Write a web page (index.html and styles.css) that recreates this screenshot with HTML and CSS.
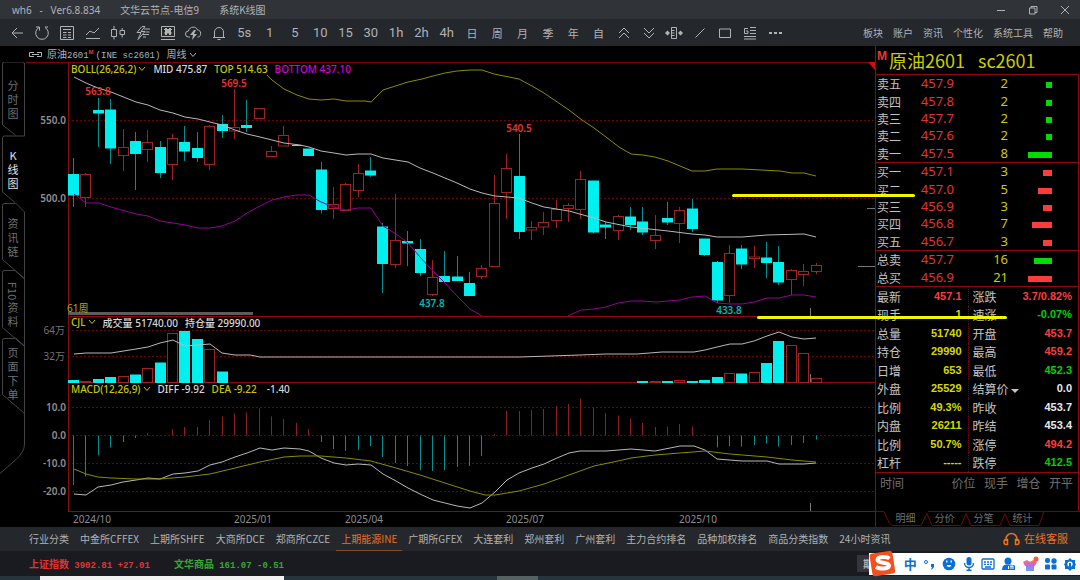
FILE: index.html
```
<!DOCTYPE html>
<html lang="zh-CN">
<head>
<meta charset="utf-8">
<meta name="viewport" content="width=device-width, initial-scale=1">
<title>wh6 - 系统K线图</title>
<link rel="stylesheet" href="styles.css">
</head>
<body>

<header class="titlebar">
    <span class="app">wh6&nbsp;&nbsp; -&nbsp;&nbsp; Ver6.8.834</span>
    <span class="node">文华云节点-电信9</span>
    <span>系统K线图</span>
    <div class="window-buttons">
        <button aria-label="最小化"><svg width="10" height="10"><path d="M1 5.500h8"/></svg></button>
        <button aria-label="还原"><svg width="10" height="10"><path d="M1.500 3h5.500v6h-5.500zM3 3v-1.500h6v6h-2"/></svg></button>
        <button aria-label="关闭"><svg width="10" height="10"><path d="M1 1l8 8M9 1l-8 8"/></svg></button>
    </div>
</header>

<div class="toolbar">
    <nav class="tools">
        <button aria-label="返回"><svg width="16" height="16"><path d="M14 8h-11M8 3l-5 5 5 5"/></svg></button>
        <button aria-label="刷新"><svg width="16" height="16"><path d="M5 2.500a6.300 6.300 0 1 0 6 0M2 2h3.500v3.500M14 2h-3"/></svg></button>
        <button aria-label="报价"><svg width="16" height="16"><path d="M1.500 1.500h13v13h-13zM4 4.500h8M4 7.500h3.500M9 7.500h3M4 10h3.500M9 10h3M4 12.500h3.500M9 12.500h3"/></svg></button>
        <button aria-label="分时"><svg width="16" height="16"><path d="M1 10l4-4 4 2 5-5M1 13.500h14"/></svg></button>
        <button aria-label="K线"><svg width="16" height="16"><path d="M1.500 4.500h5v7h-5zM4 1v3.500M4 11.500v3M10 5.500h4.500v4h-4.500zM12.200 3v2.500M12.200 9.500v3"/></svg></button>
        <button aria-label="闪电下单"><svg width="16" height="16"><path d="M7 1.500l-5 6h4l-3 7 7-8h-4l4-5zM9 4h6M10.500 7h4M8 9.500h6M11 12h-3"/></svg></button>
        <button aria-label="画线下单"><svg width="16" height="16"><path d="M1.500 1.500h13v10h-13zM1 14.500h14M4 4.500h8M4 8h8"/><path class="solid" d="M5 3h2v7h-2zM9 3h2v7h-2zM7 5h2v3h-2z"/></svg></button>
        <button aria-label="云交易"><svg width="17" height="16"><path d="M5 12h-1.500a3 3 0 0 1 0-6c1-5 8-5 9-1 4 0 4 6 1 7h-1"/><path class="solid" d="M9 5l-4 5h3l-1 5 5-6h-3l2-4z"/></svg></button>
        <button aria-label="预警"><svg width="16" height="16"><path d="M2 12.500h12M3.500 12.500v-5.500a4.500 4.500 0 0 1 9 0v5.500M6.500 14.500h3"/></svg></button>
        <button>5s</button>
        <button>1</button>
        <button>5</button>
        <button>10</button>
        <button>15</button>
        <button>30</button>
        <button>1h</button>
        <button>2h</button>
        <button>4h</button>
        <button class="cn">日</button>
        <button class="cn">周</button>
        <button class="cn">月</button>
        <button class="cn">季</button>
        <button class="cn">年</button>
        <button class="cn">自</button>
        <button aria-label="放大"><svg width="14" height="14"><path d="M2 7l5-5 5 5M2 12l5-5 5 5"/></svg></button>
        <button aria-label="缩小"><svg width="14" height="14"><path d="M2 2l5 5 5-5M2 7l5 5 5-5"/></svg></button>
        <button aria-label="区间"><svg width="18" height="14"><path d="M6.500 1.500h5v11h-5zM6.500 4.500h3M6.500 7h3M6.500 9.500h3"/><path class="solid" d="M0 7l2.500-2.500 2.500 2.500-2.500 2.500zM18 7l-2.500-2.500-2.500 2.500 2.500 2.500z"/></svg></button>
        <button aria-label="画线"><svg width="12" height="12"><path d="M1.500 10.500l9-9"/></svg></button>
        <button aria-label="矩形"><svg width="14" height="12"><path d="M1.500 2h11v8.500h-11z"/></svg></button>
        <button aria-label="列表"><svg width="14" height="14"><path d="M7 1.500h6M7 4.500h6M7 7.500h6M1 10.500h12M1 13h12M5 2.500h-3.500v5h3.500v-2.500h-2"/></svg></button>
        <button aria-label="更多"><svg width="14" height="4"><path class="solid" d="M0 1h3v2h-3zM5 1h3v2h-3zM10 1h3v2h-3z"/></svg></button>
    </nav>
    <nav class="menu">
        <button>板块</button>
        <button>账户</button>
        <button>资讯</button>
        <button>个性化</button>
        <button>系统工具</button>
        <button>帮助</button>
    </nav>
</div>

<main class="workspace">
    <section class="left">
        <div class="contract">
            <svg width="15" height="7" aria-hidden="true"><path d="M6 1.500h-4.500v4h4.500M9 1.500h4.500v4h-4.500M4 3.500h7"/></svg>
            <span class="contract-name">原油<span class="mono">2601</span></span>
            <sup>M</sup>
            <span class="mono">(INE sc2601)</span>
            <button class="period">周线 <svg width="8" height="6"><path d="M1 1l3 3.500 3-3.500"/></svg></button>
        </div>

        <div class="stage">
            <nav class="side-tabs">
                <svg class="side-lines" width="26" height="420" aria-hidden="true">
                    <path d="M24.500 74v-10q0-2-2-2h-18q-2 0-2 2v61l13 10M24.500 136h-20q-2 0-2 2v54l13 11M15 203.500h-11q-1.500 0-1.500 2v54l22 19M24.500 212l-9-9M15 270.500h-11q-1.500 0-1.500 2v55l22 19M24.500 279l-9-8M15 338.500h-11q-1.500 0-1.500 2v54l22 19M24.500 346l-9-8M24.500 63v73M24.500 212v232q0 8-9 16l-16 14" transform="translate(0 -62)"/>
                </svg>
                <button>分时图</button>
                <button class="active">K线图</button>
                <button>资讯链</button>
                <button><span class="turned">F10</span>资料</button>
                <button>页面下单</button>
            </nav>

            <div class="chart">
                <svg id="chart" viewBox="26 62 849 465" role="img" aria-label="原油2601 周K线"></svg>

                <div class="legend legend-boll">
                    <button>BOLL(26,26,2)<svg width="8" height="6"><path d="M1 1l3 3.500 3-3.500"/></svg></button>
                    <span class="white">MID 475.87</span>
                    <span>TOP 514.63</span>
                    <span class="magenta">BOTTOM 437.10</span>
                </div>
                <div class="legend legend-vol">
                    <button>CJL<svg width="8" height="6"><path d="M1 1l3 3.500 3-3.500"/></svg></button>
                    <span class="white">成交量 51740.00</span>
                    <span class="white">持仓量 29990.00</span>
                </div>
                <div class="legend legend-macd">
                    <button>MACD(12,26,9)<svg width="8" height="6"><path d="M1 1l3 3.500 3-3.500"/></svg></button>
                    <span class="white">DIFF -9.92</span>
                    <span>DEA -9.22</span>
                    <span class="white hist">-1.40</span>
                </div>
            </div>
        </div>
    </section>

    <aside class="quote">
        <h1><sup>M</sup><span>原油2601</span><span class="code">sc2601</span></h1>

        <table class="book">
            <tbody class="sell">
                <tr><th>卖五</th><td>457.9</td><td>2</td><td><i style="width:6px"></i></td></tr>
                <tr><th>卖四</th><td>457.8</td><td>2</td><td><i style="width:6px"></i></td></tr>
                <tr><th>卖三</th><td>457.7</td><td>2</td><td><i style="width:6px"></i></td></tr>
                <tr><th>卖二</th><td>457.6</td><td>2</td><td><i style="width:6px"></i></td></tr>
                <tr><th>卖一</th><td>457.5</td><td>8</td><td><i style="width:24px"></i></td></tr>
            </tbody>
        </table>
        <table class="book">
            <tbody class="buy">
                <tr><th>买一</th><td>457.1</td><td>3</td><td><i style="width:9px"></i></td></tr>
                <tr><th>买二</th><td>457.0</td><td>5</td><td><i style="width:14px"></i></td></tr>
                <tr><th>买三</th><td>456.9</td><td>3</td><td><i style="width:9px"></i></td></tr>
                <tr><th>买四</th><td>456.8</td><td>7</td><td><i style="width:20px"></i></td></tr>
                <tr><th>买五</th><td>456.7</td><td>3</td><td><i style="width:9px"></i></td></tr>
            </tbody>
        </table>
        <table class="book total">
            <tbody>
                <tr class="sell"><th>总卖</th><td>457.7</td><td>16</td><td><i style="width:18px"></i></td></tr>
                <tr class="buy"><th>总买</th><td>456.9</td><td>21</td><td><i style="width:24px"></i></td></tr>
            </tbody>
        </table>

        <table class="details">
            <tr><th>最新</th><td class="up">457.1</td><th>涨跌</th><td class="up">3.7/0.82%</td></tr>
            <tr><th>现手</th><td>1</td><th>速涨</th><td class="down">-0.07%</td></tr>
            <tr><th>总量</th><td>51740</td><th>开盘</th><td class="up">453.7</td></tr>
            <tr><th>持仓</th><td>29990</td><th>最高</th><td class="up">459.2</td></tr>
            <tr><th>日增</th><td>653</td><th>最低</th><td class="down">452.3</td></tr>
            <tr><th>外盘</th><td>25529</td><th>结算价<svg width="8" height="5"><path class="solid" d="M0 0h8l-4 4z"/></svg></th><td class="flat">0.0</td></tr>
            <tr><th>比例</th><td>49.3%</td><th>昨收</th><td class="flat">453.7</td></tr>
            <tr><th>内盘</th><td>26211</td><th>昨结</th><td class="flat">453.4</td></tr>
            <tr><th>比例</th><td>50.7%</td><th>涨停</th><td class="up">494.2</td></tr>
            <tr><th>杠杆</th><td>-----</td><th>跌停</th><td class="down">412.5</td></tr>
        </table>

        <div class="trades">
            <table>
                <tr><th>时间</th><th>价位</th><th>现手</th><th>增仓</th><th>开平</th></tr>
            </table>
        </div>

        <nav class="quote-tabs">
            <svg width="205" height="16" aria-hidden="true"><path d="M0 .500h8l5 11 3 3h29l6-12M51 2.500l5 12h29l5-12M90 2.500l5 12h29l5-12M129 2.500l5 12h29l5-14M52 .500h152"/></svg>
            <button>明细</button>
            <button>分价</button>
            <button>分笔</button>
            <button>统计</button>
        </nav>
    </aside>

    <div class="level level-top"></div>
    <div class="level level-bottom"></div>
</main>

<nav class="markets">
    <a href="#">行业分类</a>
    <a href="#">中金所CFFEX</a>
    <a href="#">上期所SHFE</a>
    <a href="#">大商所DCE</a>
    <a href="#">郑商所CZCE</a>
    <a href="#" class="active">上期能源INE</a>
    <a href="#">广期所GFEX</a>
    <a href="#">大连套利</a>
    <a href="#">郑州套利</a>
    <a href="#">广州套利</a>
    <a href="#">主力合约排名</a>
    <a href="#">品种加权排名</a>
    <a href="#">商品分类指数</a>
    <a href="#">24小时资讯</a>
    <a href="#" class="service"><svg width="17" height="14"><path d="M3 9v-2a5.500 5.500 0 0 1 11 0v2M3 7.500q-2 0-2 2.500t2 2.500h1.500v-5zM14 7.500q2 0 2 2.500t-2 2.500h-1.500v-5z"/></svg>在线客服</a>
</nav>

<footer class="status">
    <span class="index up">上证指数 <span class="mono">3902.81 +27.01</span></span>
    <span class="index green">文华商品 <span class="mono">161.07 -0.51</span></span>
    <button class="futures">期货</button>
</footer>

<div class="desktop">
    <div class="search"></div>
    <div class="task"></div>
</div>

<div class="ime">
    <svg class="ime-logo" width="28" height="28" viewBox="0 0 28 28" aria-hidden="true">
        <rect x="2" y="2" width="23" height="23" rx="3" fill="#f4501e" transform="rotate(-9 14 14)"/>
        <path d="M20.500 8.500c-3-2.500-12-2-12 1.500s11.500 2 11.500 5.500-9 4-13 1.500" fill="none" stroke="#fff" stroke-width="4"/>
    </svg>
    <button class="zh">中</button>
    <button aria-label="标点"><svg width="12" height="12"><circle cx="3" cy="4" r="1.500" fill="none" stroke="#0a6fd8"/><path class="solid" d="M8 6h3v3l-2 2.500h-1l1-2.500h-1z"/></svg></button>
    <button aria-label="表情"><svg width="14" height="14"><circle class="solid" cx="7" cy="7" r="6.300"/><path d="M4 7.500h6a3 3 0 0 1-6 0z" fill="#fff"/><path d="M4.800 3.500v2M9.200 3.500v2" stroke="#fff" stroke-width="1.400"/></svg></button>
    <button aria-label="语音"><svg width="12" height="14"><rect class="solid" x="3.500" y="0" width="5" height="8.500" rx="2.500"/><path d="M1.500 6a4.500 4.500 0 0 0 9 0M6 10.500v3M3.500 13.300h5" fill="none" stroke="#0a6fd8" stroke-width="1.400"/></svg></button>
    <button aria-label="键盘"><svg width="14" height="12"><rect x="1" y="1" width="12" height="10" rx="1" fill="none" stroke="#0a6fd8" stroke-width="1.300"/><path d="M3 4h2M6 4h2M9 4h2M3 6.300h2M6 6.300h2M9 6.300h2M4 9h6" stroke="#0a6fd8" stroke-width="1.300"/></svg></button>
    <button aria-label="用户"><svg width="14" height="14"><circle class="solid" cx="6" cy="4" r="3.500"/><path class="solid" d="M0 13q0-5 4-5.500h4l5 1v4.500z"/><path d="M6.500 9v3M9 9v3M8 9h3v3" fill="none" stroke="#fff"/></svg></button>
    <button aria-label="皮肤"><svg width="16" height="16"><defs><linearGradient id="shirt" x2="0" y2="1"><stop offset="0" stop-color="#ff6a5a"/><stop offset=".5" stop-color="#b66cf0"/><stop offset="1" stop-color="#5aa8ff"/></linearGradient></defs><path d="M4 4q3 3 6 0l4 2-2 4h-1v5h-8v-5h-1l-2-4z" fill="url(#shirt)" stroke="none"/><circle cx="13" cy="3" r="2.500" fill="#ff5a36" stroke="none"/></svg></button>
    <button aria-label="工具箱"><svg width="12" height="12"><rect class="solid" x="0" y="0" width="5" height="5" rx="2"/><circle class="solid" cx="9" cy="3" r="2.700"/><rect class="solid" x="0" y="6.500" width="5" height="5" rx="1"/><rect class="solid" x="6.500" y="6.500" width="5" height="5" rx="1"/></svg></button>
    <button aria-label="设置"><svg width="12" height="13"><path class="solid" d="M6 0l2 2 3 0 0 3 1 1.500-1 1.500v3h-3l-2 2-2-2h-3v-3l-1-1.500 1-1.500v-3h3z"/><circle cx="6" cy="6" r="2.600" fill="#fff" stroke="none"/><path d="M6 5v6" stroke-width="2"/></svg></button>
</div>

<script src="chart.js"></script>
</body>
</html>
```
FILE: styles.css
```
* {
    box-sizing: border-box;
}

body {
    display: flex;
    flex-direction: column;
    height: 100vh;
    margin: 0;
    overflow: hidden;
    position: relative;
    background: #000;
    color: #b0b2b4;
    font-family: "Noto Sans CJK SC", "Noto Sans", sans-serif;
    font-size: 10px;
}

button {
    margin: 0;
    padding: 0;
    border: none;
    background: none;
    color: inherit;
    font: inherit;
    cursor: pointer;
}

svg {
    fill: none;
    stroke: currentColor;
    flex: none;
}

.solid {
    fill: currentColor;
    stroke: none;
}

table {
    border-collapse: collapse;
}

th {
    font-weight: 400;
    text-align: left;
}

th, td {
    padding: 0;
}

.mono {
    font-family: "Liberation Mono", monospace;
    font-size: 9px;
}

/* title bar */
.titlebar {
    display: flex;
    align-items: center;
    height: 19px;
    padding-left: 12px;
    background: #303338;
    gap: 20px;
}

.app {
    font-family: "Noto Sans", sans-serif;
}

.window-buttons {
    display: flex;
    gap: 22px;
    margin-left: auto;
    padding-right: 10px;
}

.window-buttons button {
    display: flex;
}

/* toolbar */
.toolbar {
    display: flex;
    align-items: center;
    justify-content: space-between;
    height: 27px;
    background: #24272b;
}

.tools {
    display: flex;
    align-items: center;
    flex: 0 0 73%;
    padding-left: 4px;
}

.tools button {
    display: flex;
    align-items: center;
    justify-content: center;
    flex: 1;
    height: 26px;
    min-width: 0;
    font-family: Roboto, sans-serif;
    font-weight: 400;
    font-size: 13px;
}

.tools .cn {
    font-family: "Noto Sans CJK SC", sans-serif;
    font-size: 11px;
}

.menu {
    display: flex;
    gap: 10px;
    padding-right: 17px;
}

/* workspace */
.workspace {
    display: flex;
    flex: 1;
    min-height: 0;
    position: relative;
}

.left {
    display: flex;
    flex-direction: column;
    flex: 1;
    min-width: 0;
}

.contract {
    display: flex;
    align-items: baseline;
    height: 16px;
    padding-left: 28px;
    line-height: 16px;
    gap: 2px;
}

.contract > svg {
    align-self: center;
    margin-right: 2px;
}

.contract sup {
    align-self: flex-start;
    margin-left: -2px;
    color: #e33;
    font: bold 6px "Liberation Sans", sans-serif;
    line-height: 12px;
}

.period {
    margin-left: 4px;
}

.stage {
    display: flex;
    flex: 1;
    min-height: 0;
}

.side-tabs {
    display: flex;
    flex-direction: column;
    align-items: center;
    width: 26px;
    position: relative;
    color: #6e7072;
}

.side-lines {
    position: absolute;
    left: 0;
    top: 0;
    stroke: #444;
}

.side-tabs button {
    display: flex;
    flex-direction: column;
    align-items: center;
    justify-content: center;
    width: 11px;
    height: 68px;
    position: relative;
    font-size: 11px;
    line-height: 14px;
    word-break: break-all;
}

.side-tabs .active {
    color: #e4e4e4;
}

.side-tabs button:first-of-type {
    height: 73px;
    padding-top: 16px;
    justify-content: flex-start;
}

.turned {
    writing-mode: vertical-rl;
}

.chart {
    flex: 1;
    min-width: 0;
    position: relative;
    overflow: hidden;
}

#chart {
    display: block;
    width: 100%;
    height: 100%;
    font-family: "Noto Sans", "Noto Sans CJK SC", sans-serif;
    font-size: 10px;
}

#chart text {
    stroke: none;
}

.legend {
    display: flex;
    align-items: center;
    gap: 7px;
    position: absolute;
    left: 45px;
    height: 14px;
    color: #c8c800;
    font-family: "Noto Sans", "Noto Sans CJK SC", sans-serif;
    font-weight: 500;
    white-space: nowrap;
}

.legend button {
    display: flex;
    align-items: center;
    gap: 2px;
}

.legend-boll {
    top: 0;
}

.legend-vol {
    top: 253px;
}

.legend-macd {
    top: 320px;
}

.white {
    color: #d8d8d8;
}

.magenta {
    color: #d800d8;
}

.legend .hist {
    margin-left: 3px;
}

.level {
    position: absolute;
    height: 3px;
    border-radius: 2px;
    background: #f5f500;
}

.level-top {
    top: 148px;
    right: 165px;
    width: 183px;
}

.level-bottom {
    top: 270px;
    right: 73px;
    width: 250px;
}

/* quote panel */
.quote {
    display: flex;
    flex-direction: column;
    width: 205px;
    padding-right: 1px;
    border-left: 1px solid #8c0a0a;
}

.quote h1 {
    display: flex;
    align-items: center;
    height: 28px;
    margin: 0;
    padding-left: 1px;
    color: #cccc00;
    font-size: 18px;
    font-weight: 400;
    line-height: 28px;
}

.quote sup {
    align-self: flex-start;
    margin-right: 2px;
    color: #e33;
    font: bold 12px "Liberation Sans", sans-serif;
    line-height: 20px;
}

.code {
    margin-left: 13px;
}

.book, .details, .trades {
    width: 100%;
    border-top: 1px solid #8c0a0a;
    border-right: 1px solid #8c0a0a;
}

.book {
    height: 88px;
    table-layout: fixed;
    font-size: 13px;
    line-height: 17px;
}

.book th {
    width: 40px;
    padding-left: 1px;
    color: #c4c4c4;
    font-size: 12px;
}

.book td {
    width: 38px;
    color: #e03434;
    font-family: "Noto Sans", sans-serif;
    text-align: right;
}

.book td:nth-child(3) {
    width: 54px;
    color: #cccc00;
}

.book td:nth-child(4) {
    width: auto;
    padding-right: 26px;
}

.book i {
    display: block;
    height: 6px;
    margin-left: auto;
    margin-top: 3px;
}

.sell i {
    background: #00dc00;
}

.buy i {
    background: #ff3c3c;
}

.total {
    height: 36px;
}

.details {
    height: 186px;
    table-layout: fixed;
    font-size: 12px;
    line-height: 17px;
}

.details th {
    width: 32px;
    padding-left: 1px;
    color: #c4c4c4;
    white-space: nowrap;
}

.details td:nth-child(2) {
    width: 60px;
}

.details th:nth-child(3) {
    width: 48px;
    padding-left: 4px;
    border-left: 1px dotted #700808;
}

.details th svg {
    margin-left: 2px;
}

.details td {
    padding-right: 6px;
    color: #d8d800;
    font-family: "Liberation Sans", sans-serif;
    font-size: 11px;
    font-weight: 700;
    text-align: right;
}

.details td.up {
    color: #ff3c3c;
}

.details td.down {
    color: #00d000;
}

.details td.flat {
    color: #e8e8e8;
}

.trades {
    flex: 1;
    color: #707070;
    font-size: 12px;
}

.trades table {
    width: 100%;
    table-layout: fixed;
    line-height: 20px;
}

.trades th {
    padding-right: 5px;
    text-align: right;
}

.trades th:first-child {
    width: 72px;
    padding-left: 4px;
    text-align: left;
}

.quote-tabs {
    display: flex;
    height: 16px;
    padding-left: 10px;
    position: relative;
    color: #707070;
}

.quote-tabs svg {
    position: absolute;
    left: 0;
    top: 0;
    stroke: #700808;
}

.quote-tabs button {
    width: 39px;
    height: 14px;
    position: relative;
    line-height: 14px;
}

/* market tabs and status line */
.markets {
    display: flex;
    height: 24px;
    padding: 0 12px 0 24px;
    background: #24272b;
    line-height: 23px;
    gap: 1px;
}

.markets a {
    padding: 0 5px;
    border-bottom: 1px solid transparent;
    color: inherit;
    text-decoration: none;
    white-space: nowrap;
}

.markets .active {
    border-color: #8a4a20;
    color: #f07020;
}

.markets .service {
    display: flex;
    align-items: center;
    gap: 4px;
    margin-left: auto;
    padding-right: 0;
    color: #f07020;
    font-size: 11px;
}

.service svg {
    stroke-width: 1.500;
}

.status {
    display: flex;
    align-items: center;
    height: 25px;
    padding-left: 29px;
    gap: 24px;
    background: #1a1b20;
    font-weight: 700;
}

.index .mono {
    margin-left: 3px;
}

.up {
    color: #e03434;
}

.green {
    color: #35a835;
}

.futures {
    width: 40px;
    height: 17px;
    margin-left: auto;
    margin-right: 183px;
    padding-left: 6px;
    background: #34363c;
    text-align: left;
}

.desktop {
    display: flex;
    justify-content: space-between;
    height: 4px;
    padding-left: 40px;
    background: #26343b;
}

.search {
    width: 244px;
    background: #f2f2f2;
}

.task {
    width: 41px;
    margin-right: auto;
    margin-left: 213px;
    background: #566164;
}

/* input method bar floating over the window */
.ime {
    display: flex;
    align-items: center;
    justify-content: space-between;
    position: absolute;
    right: 0;
    bottom: 5px;
    width: 211px;
    height: 22px;
    padding-right: 4px;
    background: #fff;
    color: #0a6fd8;
}

.ime-logo {
    stroke: none;
}

.ime button {
    display: flex;
}

.ime .zh {
    font-size: 13px;
    font-weight: 700;
    line-height: 20px;
}
```
FILE: chart.js
```
(function() {
    "use strict";

    var chart = document.querySelector("#chart");
    var NS = "http://www.w3.org/2000/svg";
    var LEFT = 68, RIGHT = 875, FIRST = 74, STEP = 12.375;
    var CYAN = "#00f0f0", RED = "#a02222";

    // type, high, body top, body bottom, low
    var candles = [
        ["c", 158, 174.5, 195, 207], ["r", 173, 174.5, 197.5, 207], ["c", 98, 110.5, 113, 147],
        ["c", 99, 110, 148, 164], ["r", 129, 147.5, 155.5, 171], ["c", 132, 141.5, 153.5, 190],
        ["r", 130, 142.5, 149.5, 162], ["c", 141, 147.5, 172.5, 178], ["r", 134, 138.5, 164.5, 180],
        ["c", 126, 142.5, 151, 161], ["c", 132, 148.5, 157.5, 162], ["r", 125, 126.5, 164.5, 170],
        ["c", 115, 124.5, 130.5, 138], ["r", 89, 127.5, 131, 139], ["c", 100, 125.5, 127.5, 132],
        ["r", 108.5, 108.5, 118.5, 118.5], ["r", 146, 151.5, 156.5, 156.5], ["r", 126, 135.5, 146, 146],
        ["w", 145, 145, 146, 146], ["c", 149, 149, 155.5, 155.5], ["c", 162, 170, 209.5, 213.5],
        ["r", 187, 204.5, 208.5, 219], ["r", 183, 184.5, 210.5, 210.5], ["r", 164, 173.5, 190.5, 197],
        ["c", 157, 171, 175, 177], ["c", 223, 227, 263.5, 293], ["r", 194, 240.5, 264.5, 268],
        ["c", 231, 241.5, 243, 266], ["c", 239, 249.5, 272.5, 276], ["r", 260, 277.5, 294.5, 296],
        ["c", 251, 276.5, 281.5, 281.5], ["c", 256, 277, 280.5, 281], ["c", 272, 283.5, 295.5, 295.5],
        ["r", 265, 268.5, 276.5, 279], ["r", 175, 203.5, 266.5, 266.5], ["r", 154, 168.5, 192.5, 219],
        ["c", 134, 176.5, 231.5, 239], ["r", 221, 227.5, 230, 240], ["r", 212, 222.5, 227, 235],
        ["r", 200, 209.5, 220.5, 228], ["r", 203, 205.5, 208.5, 222], ["r", 171, 179.5, 209.5, 219],
        ["c", 181, 181, 232, 233.5], ["c", 222, 225, 227, 239], ["r", 215, 216.5, 230.5, 240],
        ["c", 207, 217, 224.5, 230], ["c", 207, 222, 232, 235], ["r", 215, 235.5, 240.5, 249],
        ["c", 202, 218.5, 222, 225], ["r", 207, 210.5, 223.5, 243], ["c", 199, 209, 228.5, 232],
        ["c", 239, 239, 254.5, 256], ["c", 261, 262.5, 300, 303], ["r", 245, 253.5, 295.5, 303],
        ["c", 245, 249, 264, 269], ["r", 246, 257, 258.5, 268], ["c", 242, 258, 262.5, 278],
        ["c", 246, 262.5, 282, 285], ["r", 269, 270.5, 279.5, 295], ["r", 264, 271.5, 274.5, 286],
        ["r", 263, 265.5, 271.5, 274]
    ];

    // candle index: top of the volume column
    var volume = {
        0: 380.5, 1: 381.5, 2: 379.5, 3: 377.5, 4: 376.5, 5: 375, 6: 368.5, 7: 363, 8: 333.5,
        9: 331.5, 10: 339.5, 11: 349.5, 12: 372, 46: 381.5, 47: 381.5, 48: 381.5, 49: 380.5,
        50: 381.5, 51: 380.5, 52: 377.5, 53: 373.5, 54: 374, 55: 372.5, 56: 363.5, 57: 341.5,
        58: 345.5, 59: 353.5, 60: 378.5
    };

    var macd = [
        485, 476.5, 455.5, 447.5, 442, 438, 433, 435, 429, 427, 427, 420, 416.5, 413.5, 412.5,
        408.5, 416.5, 419, 423, 429, 442, 449, 451, 450, 446, 457, 463, 466, 470, 471, 470, 467,
        466, 456, 434, 411, 411, 410, 409, 406, 404, 398.5, 407.5, 413, 415.5, 418.5, 423, 427,
        426.5, 424, 426.5, 434.5, 447.5, 446, 446.5, 445, 443.5, 446.5, 445, 443, 439.5
    ];

    var lines = [
        ["#b8b8b8", "74,77 86,83 98,88 111,92 136,102 148,105 160,110 173,113 185,117 198,119 210,122 222,125 235,130 247,134 260,137 272,140 284,143 300,145 309,147 321,151 334,153 346,155 358,154 371,154 383,158 408,162 420,168 433,173 457,183 470,189 482,193 495,196 519,198 532,203 544,207 569,211 594,218 606,222 631,227 668,231 692,234 705,235 717,237 742,237 767,235 804,234 816,237"],
        ["#8c8c00", "267,75 272,80 284,89 297,95 309,99 321,100 334,99 346,101 365,101 371,102 383,90 408,82 422,79 433,76 445,73 457,71 470,70 482,70 494,74 519,79 532,86 544,93 569,110 582,120 594,128 606,137 619,147 631,154 643,155 655,157 668,161 692,171 705,171 717,169 742,169 780,171 792,173 804,173 816,176"],
        ["#960096", "74,194 86,203 99,203 111,207 136,214 148,216 160,221 173,223 185,225 198,228 210,228 222,226 235,221 247,213 260,206 272,200 284,197 297,195 309,195 321,202 334,207 346,210 358,208 371,208 383,226 396,234 408,243 420,257 433,271 445,283 457,296 470,309 482,316"],
        ["#960096", "568,316 581,310 594,309 606,307 618,303 631,301 643,301 656,302 680,300 692,297 705,296 717,303 730,304 742,304 754,302 767,298 779,298 792,295 804,295 816,297"],
        ["#b8b8b8", "74,354 86,353 111,353 136,349 148,347 160,343 173,340 185,346 198,345 210,344 222,353 235,355 250,355 260,357 400,357 520,357 580,355 606,354 637,354 662,352 694,352 705,350 717,347 730,344 742,344 754,341 767,336 779,332 792,337 804,339 816,338"],
        ["#b8b8b8", "74,494 86,495 98,487 111,485 123,482 136,480 148,478 160,479 173,474 185,473 198,471 210,465 222,462 235,457 247,453 260,448 272,450 284,448 300,449 309,451 321,458 334,463 346,465 358,464 371,465 383,474 396,481 408,488 420,494 433,500 445,503 457,506 470,508 482,503 495,492 507,480 519,473 532,468 544,464 557,458 569,453 580,451 606,451 631,449 655,451 680,446 694,446 705,450 717,459 742,461 767,461 779,464 804,464 816,463"],
        ["#8c8c00", "74,469 86,474 98,477 111,478 136,479 160,479 185,477 210,474 235,468 260,462 284,457 300,456 321,456 346,458 371,461 396,468 420,475 445,483 470,491 485,495 495,495 519,491 544,484 569,475 594,466 618,461 631,458 655,455 680,453 705,451 730,454 767,457 792,460 816,462"]
    ];

    var add = function(name, attrs, text) {
        var node = document.createElementNS(NS, name);
        for (var key in attrs) {
            node.setAttribute(key, attrs[key]);
        }
        if (text) {
            node.textContent = text;
        }
        chart.appendChild(node);
    };

    var line = function(x1, y1, x2, y2, color, dash) {
        add("line", {x1: x1, y1: y1, x2: x2, y2: y2, stroke: color, "stroke-dasharray": dash || "none"});
    };

    var label = function(x, y, text, color, anchor, weight) {
        add("text", {x: x, y: y, fill: color, "text-anchor": anchor, "font-weight": weight}, text);
    };

    // grid and frame
    [120.5, 198.5, 330.5, 356.5, 407.5, 435.5, 463.5, 491.5].forEach(function(y) {
        line(LEFT, y, RIGHT, y, "#6e0000", "2 2");
    });
    line(26, 62.5, RIGHT, 62.5, "#780404");
    [316.5, 382.5, 511.5].forEach(function(y) {
        line(LEFT, y, RIGHT, y, "#8c0a0a");
    });
    line(68.5, 62, 68.5, 512, "#8c0a0a");
    add("path", {d: "M868 62h7v8z", fill: "#d01010", stroke: "none"});

    // axis labels
    [[550, 124], [500, 202], [10, 411], [0, 439], [-10, 467], [-20, 495]].forEach(function(a) {
        label(66, a[1], a[0].toFixed(1), "#8e8e8e", "end", 600);
    });
    label(65, 334, "64万", "#707070", "end", 400);
    label(65, 360, "32万", "#707070", "end", 400);
    [[73, "2024/10"], [234, "2025/01"], [345, "2025/04"], [506, "2025/07"], [679, "2025/10"]].forEach(function(a) {
        label(a[0], 523, a[1], "#8e8e8e", "start", 400);
    });

    candles.forEach(function(c, i) {
        var x = Math.round(FIRST + STEP * i);
        var fill = c[0] == "c" ? CYAN : "#000";
        var color = c[0] == "c" ? "#008f8f" : RED;
        if (c[0] == "w") {
            line(x - 5, 145.5, x + 5, 145.5, "#b8b8b8");
            return;
        }
        line(x - 0.5, c[1], x - 0.5, c[4], color);
        add("rect", {
            x: x - 5.5, y: c[2], width: 10, height: Math.max(c[3] - c[2], 1),
            fill: fill, stroke: c[0] == "c" ? CYAN : color
        });
        if (volume[i]) {
            add("rect", {
                x: x - 5.5, y: volume[i], width: 10, height: 382.5 - volume[i],
                fill: fill, stroke: c[0] == "c" ? CYAN : color
            });
        }
    });

    macd.forEach(function(y, i) {
        var x = Math.round(FIRST + STEP * i) - 0.5;
        line(x, 435.5, x, y, y > 435.5 ? "#008f8f" : "#902020");
    });

    lines.forEach(function(l) {
        add("polyline", {points: l[1], stroke: l[0]});
    });

    // highs and lows
    label(98, 95, "563.8", "#e03434", "middle", 600);
    label(234, 87, "569.5", "#e03434", "middle", 600);
    label(519, 132, "540.5", "#e03434", "middle", 600);
    label(432, 307, "437.8", "#00b8b8", "middle", 600);
    label(729, 314, "433.8", "#00b8b8", "middle", 600);

    // scroll bar and cursor marks
    add("rect", {x: 68, y: 312, width: 185, height: 3, fill: "#5c5c5c", stroke: "none"});
    label(67, 312, "61周", "#b0b000", "start", 400);
    line(810.5, 308, 810.5, 316, "#777");
    line(810.5, 374, 810.5, 382, "#777");
    line(810.5, 503, 810.5, 511, "#777");
    line(867, 208.5, RIGHT, 208.5, "#777");
    line(858, 266.5, RIGHT, 266.5, "#777");
}());
```
